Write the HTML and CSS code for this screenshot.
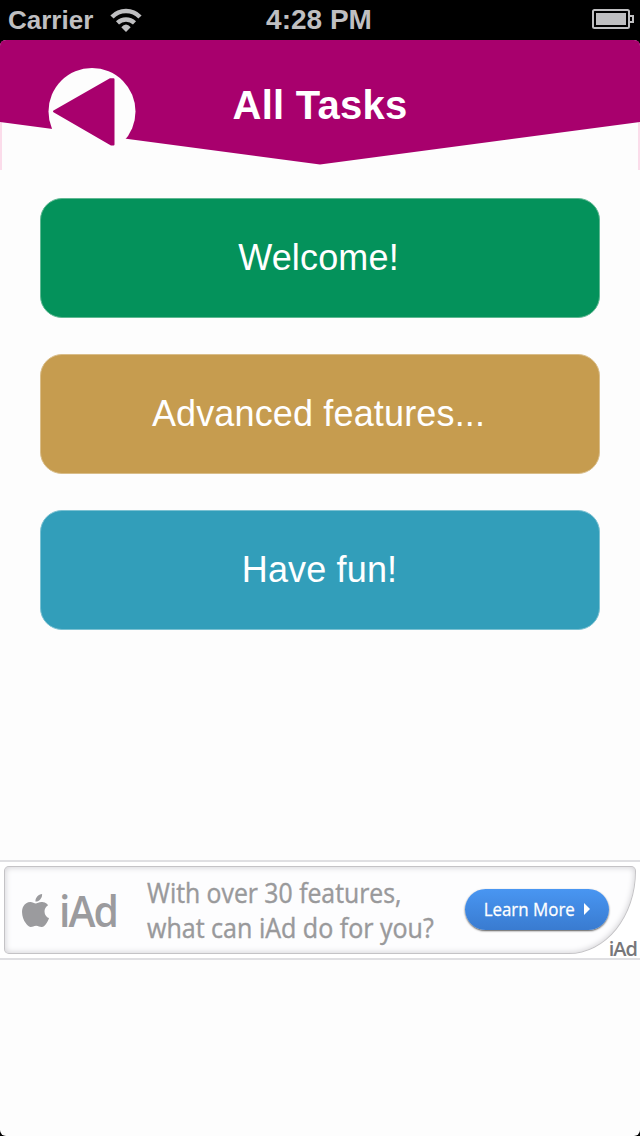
FILE: index.html
```
<!DOCTYPE html>
<html lang="en">
<head>
    <meta charset="UTF-8">
    <meta name="viewport" content="width=device-width, initial-scale=1.0">
    <title>All Tasks</title>
    <link rel="stylesheet" href="styles.css">
</head>
<body>
    <div class="status-bar">
        <div class="carrier">
            <span class="carrier-name">Carrier</span>
            <svg class="wifi" width="32" height="24" viewBox="0 0 32 24">
                <path d="M2 9a19.500 19.500 0 0 1 28 0" />
                <path d="M7.500 14.800a12.500 12.500 0 0 1 17 0" />
                <path class="wifi-dot" d="M11.300 19.200Q16 14 20.700 19.200L16 24Z" />
            </svg>
        </div>
        <span class="time">4:28 PM</span>
        <svg class="battery" width="42" height="20" viewBox="0 0 42 20">
            <rect class="battery-case" x="1" y="1" width="36" height="18" rx="1.500" />
            <rect class="battery-level" x="4" y="4" width="30" height="12" />
            <path class="battery-case" d="M37 7h4v6h-4" />
        </svg>
    </div>

    <div class="screen">
        <header class="header">
            <svg class="header-shape" width="640" height="130" viewBox="0 0 640 130">
                <path class="edge" d="M0 82h2v48h-2zM638 82h2v48h-2z" />
                <path class="banner" d="M0 6Q0 0 6 0H634Q640 0 640 6V82L320 124.500L0 82Z" />
                <circle class="back-circle" cx="92" cy="71.500" r="43.500" />
                <path class="back-arrow" d="M54 71.300L110 39.300H113.500V104.500H111Z" />
            </svg>
            <h1>All Tasks</h1>
        </header>

        <main class="tasks">
            <button class="task green"><span>Welcome!</span></button>
            <button class="task gold"><span>Advanced features...</span></button>
            <button class="task blue"><span>Have fun!</span></button>
        </main>

        <div class="ad">
            <div class="ad-panel">
                <svg class="apple" width="27" height="33" viewBox="2.200 0 19.600 24" preserveAspectRatio="none">
                    <path d="M12.152 6.896c-.948 0-2.415-1.078-3.960-1.040-2.040.027-3.910 1.183-4.961 3.014-2.117 3.675-.546 9.103 1.519 12.090 1.013 1.454 2.208 3.090 3.792 3.039 1.520-.065 2.090-.987 3.935-.987 1.831 0 2.350.987 3.960.948 1.637-.026 2.676-1.480 3.676-2.948 1.156-1.688 1.636-3.325 1.662-3.415-.039-.013-3.182-1.221-3.220-4.857-.026-3.040 2.480-4.494 2.597-4.559-1.429-2.090-3.623-2.324-4.390-2.376-2-.156-3.675 1.090-4.610 1.090zM15.530 3.830c.843-1.012 1.400-2.427 1.245-3.830-1.207.052-2.662.805-3.532 1.818-.780.896-1.454 2.338-1.273 3.714 1.338.104 2.715-.688 3.559-1.701" />
                </svg>
                <span class="ad-logo">iAd</span>
                <p class="ad-text"><span class="line1">With over 30 features,</span><span class="line2">what can iAd do for you?</span></p>
                <button class="learn-more">
                    <span>Learn More</span>
                    <svg width="6" height="12" viewBox="0 0 6 12"><path d="M0 0L6 6L0 12Z" /></svg>
                </button>
            </div>
            <span class="ad-tag">iAd</span>
        </div>
    </div>
</body>
</html>
```
FILE: styles.css
```
* {
    box-sizing: border-box;
}
body {
    margin: 0;
    width: 640px;
    height: 1136px;
    overflow: hidden;
    background-color: #000;
    font-family: "Liberation Sans", Arial, sans-serif;
}
button {
    border: none;
    padding: 0;
    font-family: inherit;
    cursor: pointer;
}
.status-bar {
    display: grid;
    grid-template-columns: 1fr auto 1fr;
    align-items: center;
    height: 40px;
    padding: 0 6px 0 8px;
    color: #bfbfc1;
    font-size: 26px;
    font-weight: bold;
    line-height: 40px;
}
.carrier {
    display: flex;
    align-items: center;
    gap: 17px;
}
.time {
    margin-right: 4px;
    font-size: 28px;
}
.wifi {
    fill: none;
    stroke: #bfbfc1;
    stroke-width: 4.5;
}
.wifi .wifi-dot {
    fill: #bfbfc1;
    stroke: none;
}
.battery {
    justify-self: end;
    margin-bottom: 2px;
}
.battery-case {
    fill: none;
    stroke: #bfbfc1;
    stroke-width: 2;
}
.battery-level {
    fill: #bfbfc1;
}
.screen {
    height: 1096px;
    background-color: #fdfdfd;
    border-radius: 6px;
}
.header {
    position: relative;
    height: 130px;
}
.header-shape {
    display: block;
}
.banner,
.back-arrow {
    fill: #a8006d;
}
.back-arrow {
    stroke: #a8006d;
    stroke-width: 2;
    stroke-linejoin: round;
}
.back-circle {
    fill: #fdfdfd;
}
.edge {
    fill: #fbdcea;
}
.header h1 {
    position: absolute;
    top: 41px;
    left: 0;
    width: 640px;
    margin: 0;
    color: #fff;
    font-size: 40px;
    line-height: 48px;
    letter-spacing: 0.25px;
    text-align: center;
}
.tasks {
    display: flex;
    flex-direction: column;
    gap: 36px;
    padding: 28px 40px 0;
}
.task {
    height: 120px;
    padding-right: 3px;
    border: 1px solid;
    border-radius: 22px;
    color: #fff;
    font-size: 36px;
    letter-spacing: 0.15px;
}
.green {
    background-color: #04925b;
    border-color: #5fb892;
}
.gold {
    background-color: #c69c4f;
    border-color: #d9bd89;
}
.blue {
    padding-right: 1px;
    background-color: #329eba;
    border-color: #7bc1d2;
}

/* iAd banner */
.ad {
    position: relative;
    height: 100px;
    margin-top: 230px;
    padding: 4px;
    border-top: 2px solid #dfdfe2;
    border-bottom: 2px solid #dfdfe2;
    background-color: #fff;
    font-family: "Open Sans", "Noto Sans", sans-serif;
}
.ad-panel {
    display: flex;
    align-items: center;
    height: 88px;
    padding-left: 17px;
    background-color: #fdfdfe;
    border: 1px solid #c4c3c6;
    border-radius: 5px 5px 68px 5px / 5px 5px 84px 5px;
    box-shadow: inset 0 0 6px #cbcacf;
}
.apple {
    fill: #9b9b9e;
}
.ad-logo {
    width: 60px;
    margin-left: 10px;
    color: #9b9b9e;
    font-size: 43px;
    font-weight: 600;
    letter-spacing: -2px;
    white-space: nowrap;
    transform: scaleX(0.95);
    transform-origin: left;
}
.ad-text {
    width: 290px;
    margin: 2px 0 0 28px;
    color: #99999b;
    font-size: 26.5px;
    line-height: 35px;
    white-space: nowrap;
    -webkit-text-stroke: 0.4px #99999b;
}
.ad-text span {
    display: block;
    transform: scaleX(0.935);
    transform-origin: left;
}
.ad-text .line2 {
    transform: scaleX(0.945);
}
.learn-more {
    display: flex;
    align-items: center;
    justify-content: center;
    width: 144px;
    height: 41px;
    margin: -2px 0 0 28px;
    border-radius: 21px;
    background: linear-gradient(#4996f2, #397bd0);
    box-shadow: 0 1px 2px #555;
    color: #fff;
    font-size: 19px;
    white-space: nowrap;
}
.learn-more span {
    margin: 0 -4px 0 -6px;
    transform: scaleX(0.89);
    -webkit-text-stroke: 0.3px #fff;
}
.learn-more svg {
    margin-left: 7px;
    fill: #fff;
}
.ad-tag {
    position: absolute;
    right: 3px;
    bottom: -4px;
    color: #77777a;
    font-size: 20px;
    font-weight: 600;
    line-height: 26px;
    letter-spacing: -1px;
}
```
